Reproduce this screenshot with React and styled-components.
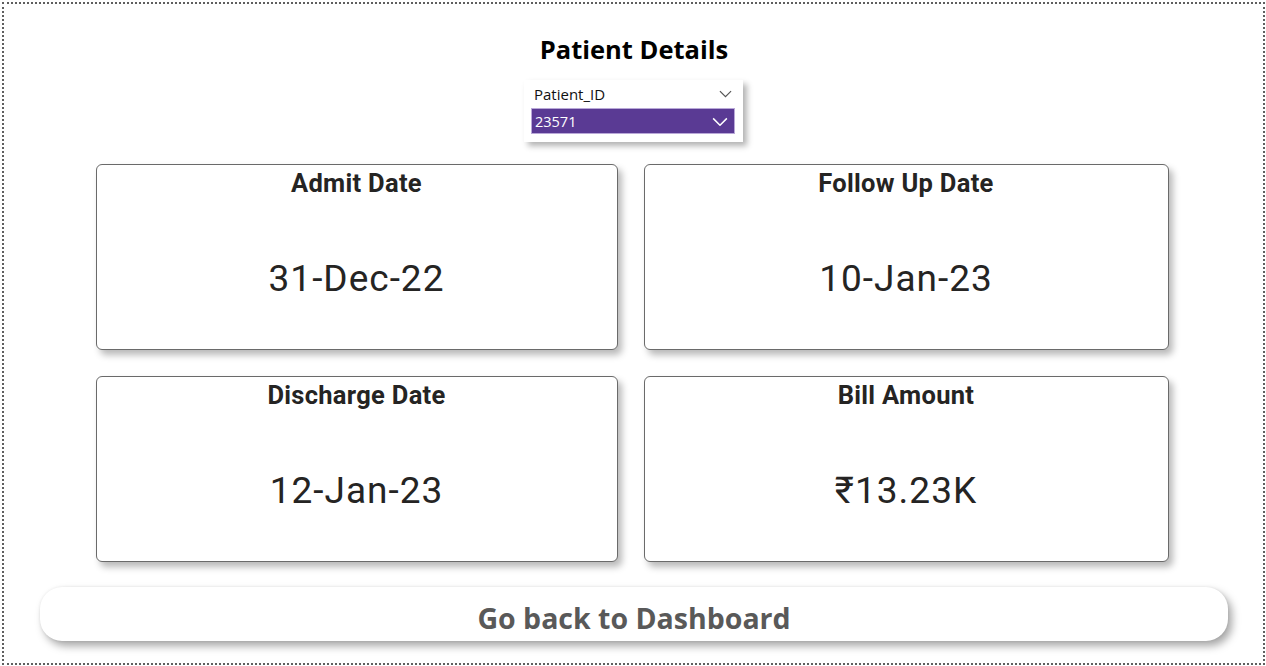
import React from 'react';
import styled, { createGlobalStyle } from 'styled-components';

const GlobalStyle = createGlobalStyle`
  html, body {
    margin: 0;
    padding: 0;
    background: #ffffff;
  }
`;

const cards = [
  { title: 'Admit Date', value: '31-Dec-22' },
  { title: 'Follow Up Date', value: '10-Jan-23' },
  { title: 'Discharge Date', value: '12-Jan-23' },
  { title: 'Bill Amount', value: '₹13.23K' },
];

const Chevron = ({ color, size }) => (
  <svg width={size} height={size * 0.6} viewBox="0 0 14 8" fill="none">
    <path d="M1 1l6 6 6-6" stroke={color} strokeWidth="1.3" />
  </svg>
);

const App = () => {
  return (
    <>
      <GlobalStyle />
      <Frame>
        <PageTitle>Patient Details</PageTitle>
        <Slicer>
          <SlicerHeader>
            <SlicerLabel>Patient_ID</SlicerLabel>
            <Chevron color="#555" size={13} />
          </SlicerHeader>
          <SlicerSelect>
            <span>23571</span>
            <Chevron color="#fff" size={16} />
          </SlicerSelect>
        </Slicer>
        <CardGrid>
          {cards.map((card) => (
            <Card key={card.title}>
              <CardTitle>{card.title}</CardTitle>
              <CardValue>{card.value}</CardValue>
            </Card>
          ))}
        </CardGrid>
        <BackButton>Go back to Dashboard</BackButton>
      </Frame>
    </>
  );
};

const Frame = styled.div`
  box-sizing: border-box;
  margin: 2px;
  width: 1263px;
  height: 663px;
  border: 2px dotted #5f5f5f;
  display: flex;
  flex-direction: column;
  align-items: center;
  padding-top: 27px;
`;

const PageTitle = styled.h1`
  margin: 0 0 0 1px;
  font-family: 'Open Sans', sans-serif;
  font-weight: 700;
  font-size: 25.5px;
  line-height: 36px;
  color: #000;
`;

const Slicer = styled.div`
  box-sizing: border-box;
  width: 219px;
  height: 62px;
  margin-top: 13px;
  background: #fff;
  box-shadow: 4px 4px 6px rgba(0, 0, 0, 0.3);
  padding: 4px 8px 0 7px;
  display: flex;
  flex-direction: column;
`;

const SlicerHeader = styled.div`
  display: flex;
  justify-content: space-between;
  align-items: center;
  height: 20px;
  padding: 0 3px 0 3px;
`;

const SlicerLabel = styled.span`
  font-family: 'Open Sans', sans-serif;
  font-size: 15px;
  color: #111;
`;

const SlicerSelect = styled.div`
  box-sizing: border-box;
  margin-top: 4px;
  height: 26px;
  background: #5a3a94;
  border: 1px solid #b9a8d8;
  display: flex;
  justify-content: space-between;
  align-items: center;
  padding: 1px 6px 0 3px;
  font-family: 'Open Sans', sans-serif;
  font-size: 14.5px;
  color: #fff;
`;

const CardGrid = styled.div`
  display: grid;
  grid-template-columns: 522px 525px;
  grid-template-rows: 186px 186px;
  column-gap: 26px;
  row-gap: 26px;
  margin-top: 22px;
  margin-left: -3px;
`;

const Card = styled.div`
  box-sizing: border-box;
  border: 1px solid #6a6a6a;
  border-radius: 6px;
  background: #fff;
  box-shadow: 4px 5px 7px rgba(0, 0, 0, 0.28);
  display: flex;
  flex-direction: column;
  align-items: center;
  padding-top: 3px;
`;

const CardTitle = styled.div`
  font-family: 'Roboto', sans-serif;
  font-weight: 700;
  font-size: 25.5px;
  letter-spacing: 0.3px;
  line-height: 30px;
  color: #252423;
`;

const CardValue = styled.div`
  font-family: 'Roboto', sans-serif;
  font-weight: 400;
  font-size: 37px;
  letter-spacing: 1px;
  color: #252423;
  margin-top: 59px;
`;

const BackButton = styled.button`
  box-sizing: border-box;
  margin-top: 25px;
  margin-left: 1px;
  width: 1188px;
  height: 54px;
  padding-top: 8px;
  border: none;
  border-radius: 22px;
  background: #fff;
  box-shadow: 4px 5px 8px rgba(0, 0, 0, 0.35), 0 0 3px rgba(0, 0, 0, 0.08);
  font-family: 'Open Sans', sans-serif;
  font-weight: 700;
  font-size: 28.5px;
  color: #595959;
  cursor: pointer;
`;

export default App;
